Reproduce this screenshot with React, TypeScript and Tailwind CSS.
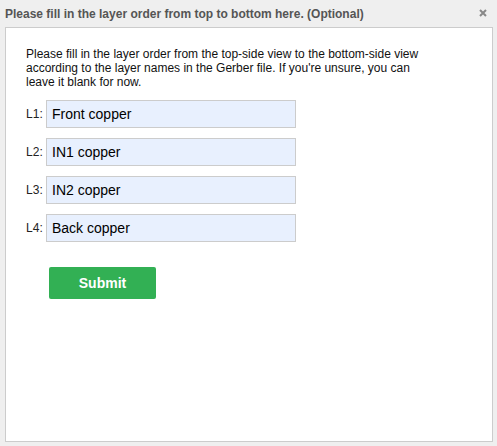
import React, { useState } from 'react';

const layers = ['Front copper', 'IN1 copper', 'IN2 copper', 'Back copper'];

export default function App() {
  const [values, setValues] = useState<string[]>(layers);

  return (
    <div className="w-[497px] h-[446px] bg-[#efefef] flex flex-col font-['Liberation_Sans',Arial,sans-serif]">
      {/* Header */}
      <div className="h-[27px] flex items-center justify-between pl-[5px] pr-[10px]">
        <span className="text-[12px] font-bold text-[#555555]">
          Please fill in the layer order from top to bottom here. (Optional)
        </span>
        <svg width="8" height="8" viewBox="0 0 8 8" className="mb-[1px]">
          <path d="M1 1L7 7M7 1L1 7" stroke="#888888" strokeWidth="2" />
        </svg>
      </div>

      {/* Body */}
      <div className="ml-[5px] mr-[4px] h-[415px] bg-white border border-[#cccccc] pt-[19px] px-[20px]">
        <p className="text-[12px] leading-[14px] text-[#111111] w-[400px]">
          Please fill in the layer order from the top-side view to the bottom-side view according to the layer names in the Gerber file. If you're unsure, you can leave it blank for now.
        </p>

        <div className="mt-[11px] flex flex-col gap-[10px]">
          {values.map((v, i) => (
            <div key={i} className="flex items-center">
              <label className="w-[20px] text-[12px] text-[#222222]">L{i + 1}:</label>
              <input
                type="text"
                value={v}
                onChange={(e) => {
                  const next = [...values];
                  next[i] = e.target.value;
                  setValues(next);
                }}
                className="w-[250px] h-[28px] bg-[#e8f0fe] border border-[#cccccc] px-[5px] text-[14px] text-black outline-none"
              />
            </div>
          ))}
        </div>

        <button className="mt-[25px] ml-[23px] w-[107px] h-[32px] bg-[#32b054] rounded-[2px] text-white text-[14px] font-bold">
          Submit
        </button>
      </div>
    </div>
  );
}
